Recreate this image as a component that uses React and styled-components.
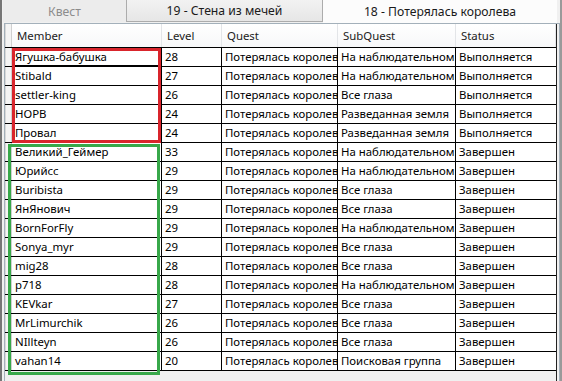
import React from "react";
import styled, { createGlobalStyle } from "styled-components";

const GlobalStyle = createGlobalStyle`
  html, body {
    margin: 0;
    padding: 0;
    background: #f0f0f0;
  }
  body {
    font-family: "Noto Sans", "Liberation Sans", sans-serif;
    font-size: 11.4px;
    color: #000;
  }
`;

const columns = [
  { key: "member", title: "Member", width: 150 },
  { key: "level", title: "Level", width: 60 },
  { key: "quest", title: "Quest", width: 116 },
  { key: "sub", title: "SubQuest", width: 118 },
  { key: "status", title: "Status", width: 100 },
];

const QUEST = "Потерялась королева";
const NAB = "На наблюдательном";
const EYES = "Все глаза";
const LAND = "Разведанная земля";
const RUN = "Выполняется";
const DONE = "Завершен";

const rows = [
  ["Ягушка-бабушка", 28, NAB, RUN],
  ["Stibald", 27, NAB, RUN],
  ["settler-king", 26, EYES, RUN],
  ["НОРВ", 24, LAND, RUN],
  ["Провал", 24, LAND, RUN],
  ["Великий_Геймер", 33, NAB, DONE],
  ["Юрийсс", 29, NAB, DONE],
  ["Buribista", 29, EYES, DONE],
  ["ЯнЯнович", 29, EYES, DONE],
  ["BornForFly", 29, NAB, DONE],
  ["Sonya_myr", 29, EYES, DONE],
  ["mig28", 28, EYES, DONE],
  ["p718", 28, NAB, DONE],
  ["KEVkar", 27, EYES, DONE],
  ["MrLimurchik", 26, EYES, DONE],
  ["NIllteyn", 26, EYES, DONE],
  ["vahan14", 20, "Поисковая группа", DONE],
];

const template = `7px ${columns.map((c) => c.width + "px").join(" ")}`;

const App = () => {
  return (
    <Frame>
      <GlobalStyle />
      <TabStrip>
        <Tab $width={123} $state="idle">Квест</Tab>
        <Tab $width={197} $state="hover">19 - Стена из мечей</Tab>
        <Tab $width={234} $state="active">18 - Потерялась королева</Tab>
      </TabStrip>
      <Panel>
        <Grid>
          <HeaderRow>
            <RowHeaderCell />
            {columns.map((c) => (
              <HeaderCell key={c.key}>{c.title}</HeaderCell>
            ))}
          </HeaderRow>
          {rows.map((r, i) => (
            <Row key={r[0]}>
              <RowHeaderCell />
              <Cell $focus={i === 0}>{r[0]}</Cell>
              <Cell>{r[1]}</Cell>
              <Cell>{QUEST}</Cell>
              <Cell>{r[2]}</Cell>
              <Cell>{r[3]}</Cell>
            </Row>
          ))}
        </Grid>
      </Panel>
      <Marker $color="#d9252c" $left={10} $top={48} $width={149} $height={95} />
      <Marker $color="#38a84a" $left={6} $top={144} $width={152} $height={231} />
    </Frame>
  );
};

export default App;

const Frame = styled.div`
  position: relative;
  width: 562px;
  height: 381px;
  box-sizing: border-box;
  border-left: 2px solid #767676;
  border-right: 2px solid #9a9a9a;
  background: #f0f0f0;
  overflow: hidden;
`;

const TabStrip = styled.div`
  display: flex;
  height: 23px;
  padding-left: 1px;
  box-sizing: border-box;
`;

const Tab = styled.div`
  width: ${({ $width }) => $width}px;
  height: ${({ $state }) => ($state === "active" ? "23px" : "22px")};
  box-sizing: border-box;
  display: flex;
  align-items: center;
  justify-content: center;
  font-size: 12.2px;
  color: ${({ $state }) => ($state === "idle" ? "#8c8c8c" : "#1a1a1a")};
  background: ${({ $state }) =>
    $state === "active"
      ? "#fcfcfc"
      : $state === "hover"
      ? "linear-gradient(#f2f2f2, #e6e6e6)"
      : "#ececec"};
  border: ${({ $state }) => ($state === "hover" ? "1px solid #acacac" : "none")};
  border-top: none;
`;

const Panel = styled.div`
  margin-left: 2px;
  height: 358px;
  border: 1px solid #a3b0ba;
  border-bottom: none;
  background: #f0f0f0;
  box-sizing: border-box;
`;

const Grid = styled.div`
  display: flex;
  flex-direction: column;
  width: 551px;
  border-right: 1px solid #222;
  height: 100%;
`;

const HeaderRow = styled.div`
  display: grid;
  grid-template-columns: ${template};
  height: 24px;
  background: linear-gradient(#ffffff, #f7f8f9);
  border-bottom: 1px solid #000;
  box-sizing: border-box;
`;

const HeaderCell = styled.div`
  padding: 0 5px;
  display: flex;
  align-items: center;
  color: #222;
  border-right: 1px solid #e3e5e8;
  white-space: nowrap;
  overflow: hidden;
`;

const Row = styled.div`
  display: grid;
  grid-template-columns: ${template};
  height: 19px;
  background: #fff;
  border-bottom: 1px solid #000;
  box-sizing: border-box;
`;

const RowHeaderCell = styled.div`
  background: #f4f4f4;
  border-left: 1px solid #d8d8d8;
  border-right: 1px solid #d0d0d0;
`;

const Cell = styled.div`
  padding: 0 3px;
  line-height: 18px;
  white-space: nowrap;
  overflow: hidden;
  border-right: 1px solid #000;
  box-shadow: ${({ $focus }) => ($focus ? "inset 0 -1px 0 #000" : "none")};
  &:last-child {
    border-right: none;
  }
`;

const Marker = styled.div`
  position: absolute;
  left: ${({ $left }) => $left}px;
  top: ${({ $top }) => $top}px;
  width: ${({ $width }) => $width}px;
  height: ${({ $height }) => $height}px;
  border: 3px solid ${({ $color }) => $color};
  box-sizing: border-box;
  pointer-events: none;
`;
